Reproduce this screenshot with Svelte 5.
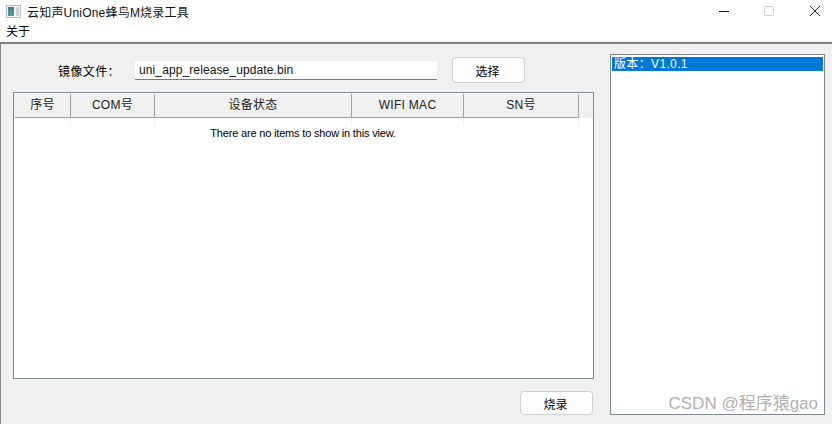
<script>
	const columns = [
		{ label: '序号', width: 56 },
		{ label: 'COM号', width: 84 },
		{ label: '设备状态', width: 197 },
		{ label: 'WIFI MAC', width: 112 },
		{ label: 'SN号', width: 115 }
	];
</script>

<div class="window">
	<div class="titlebar">
		<svg class="app-icon" width="15" height="13" viewBox="0 0 15 13">
			<rect x="0.5" y="0.5" width="14" height="12" fill="#f4f6f6" stroke="#b5bcc0" />
			<rect x="2" y="2" width="6" height="9" fill="#4f9a8c" />
			<rect x="2" y="2" width="6" height="3" fill="#3f7f9a" />
			<rect x="10" y="2" width="3" height="9" fill="#c9d0d6" />
		</svg>
		<span class="title">云知声UniOne蜂鸟M烧录工具</span>
		<div class="controls">
			<svg width="10" height="10" viewBox="0 0 10 10"><path d="M0 5.5h10" stroke="#111" stroke-width="1" /></svg>
			<svg width="10" height="10" viewBox="0 0 10 10"><rect x="0.5" y="0.5" width="9" height="9" rx="1" fill="none" stroke="#cfcfcf" /></svg>
			<svg class="close" width="10" height="10" viewBox="0 0 10 10"><path d="M0 0l10 10M10 0L0 10" stroke="#222" stroke-width="1" /></svg>
		</div>
	</div>
	<div class="menubar"><span>关于</span></div>

	<div class="content">
		<div class="main">
			<div class="file-row">
				<span class="file-label">镜像文件：</span>
				<div class="file-input">uni_app_release_update.bin</div>
				<button class="btn">选择</button>
			</div>

			<div class="table">
				<div class="thead">
					{#each columns as col}
						<div class="th" style="width: {col.width}px">{col.label}</div>
					{/each}
				</div>
				<div class="ticks">
					{#each columns as col}
						<div class="tick" style="width: {col.width}px"></div>
					{/each}
				</div>
				<div class="empty">There are no items to show in this view.</div>
			</div>

			<div class="actions">
				<button class="btn">烧录</button>
			</div>
		</div>

		<div class="log">
			<div class="log-item">版本：V1.0.1</div>
		</div>
	</div>

	<div class="watermark">CSDN @程序猿gao</div>
</div>

<style>
	:global(body) {
		background: #f0f0f0;
	}

	.window {
		position: relative;
		width: 832px;
		height: 424px;
		overflow: hidden;
		display: flex;
		flex-direction: column;
		background: #f0f0f0;
		color: #000;
		font-family: "Liberation Sans", "Noto Sans CJK SC", sans-serif;
		font-size: 12px;
	}

	.titlebar {
		height: 22px;
		flex: none;
		display: flex;
		align-items: center;
		background: #fff;
		padding-left: 6px;
	}

	.app-icon {
		margin-right: 6px;
	}

	.title {
		font-size: 12px;
		color: #111;
		letter-spacing: 0.2px;
	}

	.controls {
		margin-left: auto;
		display: flex;
		gap: 35px;
		align-items: center;
		margin-right: 12px;
	}

	.close {
		margin-left: 1px;
	}

	.menubar {
		height: 20px;
		flex: none;
		background: #fff;
		padding-left: 6px;
		line-height: 20px;
		box-sizing: border-box;
		border-bottom: 1px solid #f0f0f0;
		font-size: 12px;
	}

	.content {
		flex: 1;
		display: flex;
		gap: 16px;
		padding: 10px 7px 9px 13px;
		border-top: 2px solid #7f7f7f;
		box-shadow: inset 1px 0 0 #8a8a8a;
	}

	.main {
		width: 581px;
		flex: none;
		display: flex;
		flex-direction: column;
	}

	.file-row {
		display: flex;
		align-items: center;
		height: 26px;
		margin-top: 3px;
		margin-bottom: 9px;
	}

	.file-label {
		margin-left: 45px;
		width: 77px;
		flex: none;
		font-size: 12px;
		letter-spacing: 0.4px;
	}

	.file-input {
		width: 302px;
		height: 19px;
		flex: none;
		background: #fff;
		padding-left: 4px;
		border-bottom: 1px solid #7a7a7a;
		box-sizing: border-box;
		line-height: 18px;
		font-size: 12px;
		color: #111;
		letter-spacing: 0.11px;
	}

	.btn {
		width: 73px;
		height: 26px;
		margin: 0 0 0 15px;
		padding: 0 2px 0 0;
		background: #fdfdfd;
		border: 1px solid #d0d0d0;
		border-radius: 4px;
		font: inherit;
		color: #000;
	}

	.table {
		height: 287px;
		flex: none;
		box-sizing: border-box;
		background: #fff;
		border: 1px solid #7f878f;
		padding-top: 1px;
	}

	.thead {
		display: flex;
		height: 24px;
		box-sizing: border-box;
		background: #f0f0f0;
		padding-left: 1px;
	}

	.th {
		flex: none;
		box-sizing: border-box;
		text-align: center;
		line-height: 22px;
		border-right: 1px solid #a0a0a0;
		border-bottom: 1px solid #a0a0a0;
		color: #222;
		font-size: 12px;
		letter-spacing: 0.3px;
	}

	.ticks {
		display: flex;
		height: 8px;
		padding-left: 1px;
	}

	.tick {
		flex: none;
		box-sizing: border-box;
		border-right: 1px solid #efefef;
	}

	.empty {
		text-align: center;
		font-size: 11px;
		letter-spacing: -0.18px;
		line-height: 15px;
		margin-right: 1px;
	}

	.actions {
		display: flex;
		justify-content: flex-end;
		margin-top: 12px;
	}

	.actions .btn {
		width: 73px;
		height: 24px;
		margin-right: 1px;
	}

	.log {
		width: 215px;
		flex: none;
		box-sizing: border-box;
		background: #fff;
		border: 1px solid #7f878f;
		padding: 1px;
	}

	.log-item {
		height: 14px;
		line-height: 14px;
		margin-top: 1px;
		background: #0078d7;
		color: #fff;
		padding-left: 2px;
		font-size: 12px;
		letter-spacing: 0.35px;
	}

	.watermark {
		position: absolute;
		right: 14px;
		bottom: 10px;
		color: #b0b0b0;
		font-size: 17px;
		line-height: 20px;
		font-family: "Liberation Sans", "Noto Sans CJK SC", sans-serif;
	}
</style>
